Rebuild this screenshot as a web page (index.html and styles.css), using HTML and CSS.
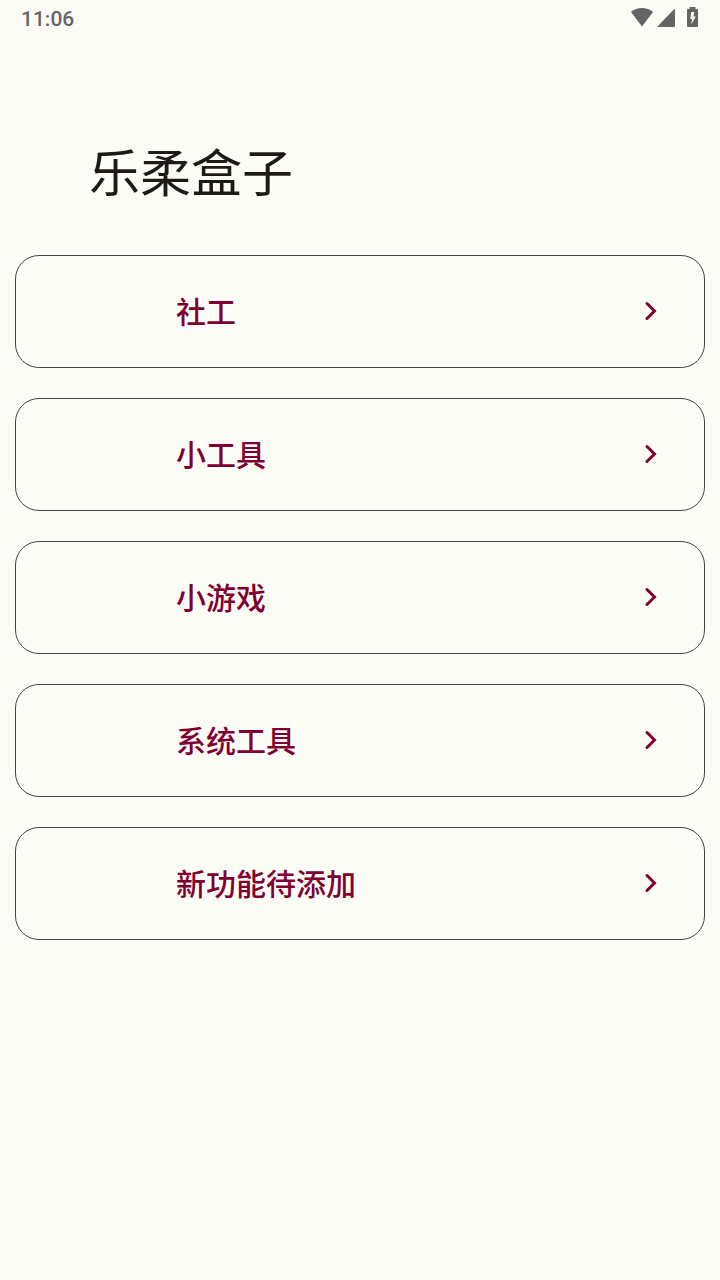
FILE: index.html
```html
<!DOCTYPE html>
<html lang="zh-CN">
<head>
    <meta charset="UTF-8">
    <meta name="viewport" content="width=device-width, initial-scale=1.0">
    <title>乐柔盒子</title>
    <link rel="stylesheet" href="styles.css">
</head>
<body>

<div class="status-bar">
    <span class="time">11:06</span>
    <div class="status-icons">
        <svg class="wifi" width="24" height="20" viewBox="0 0 24 20" aria-hidden="true">
            <path d="M12 19.5 L1 5 C7 -0.4 17 -0.4 23 5 Z"/>
        </svg>
        <svg class="signal" width="18" height="20" viewBox="0 0 18 20" aria-hidden="true">
            <path d="M0 20 L16.8 2.4 Q18 1.4 18 3 V19 Q18 20 17 20 Z"/>
        </svg>
        <svg class="battery" width="11" height="20" viewBox="0 0 11 20" aria-hidden="true">
            <path fill-rule="evenodd" d="M2.5 0 H8.5 V2 H10 Q11 2 11 3 V19 Q11 20 10 20 H1 Q0 20 0 19 V3 Q0 2 1 2 H2.5 Z M7.2 5 H4.4 L3.2 12 H5 L4.2 17.4 L8.8 9.4 H6.4 Z"/>
        </svg>
    </div>
</div>

<h1>乐柔盒子</h1>

<main class="menu">
    <button type="button" class="card">
        <span>社工</span>
        <svg class="arrow" width="14" height="20" viewBox="0 0 14 20" aria-hidden="true"><path d="M3 2.5 L10.5 10 L3 17.5"/></svg>
    </button>
    <button type="button" class="card">
        <span>小工具</span>
        <svg class="arrow" width="14" height="20" viewBox="0 0 14 20" aria-hidden="true"><path d="M3 2.5 L10.5 10 L3 17.5"/></svg>
    </button>
    <button type="button" class="card">
        <span>小游戏</span>
        <svg class="arrow" width="14" height="20" viewBox="0 0 14 20" aria-hidden="true"><path d="M3 2.5 L10.5 10 L3 17.5"/></svg>
    </button>
    <button type="button" class="card">
        <span>系统工具</span>
        <svg class="arrow" width="14" height="20" viewBox="0 0 14 20" aria-hidden="true"><path d="M3 2.5 L10.5 10 L3 17.5"/></svg>
    </button>
    <button type="button" class="card">
        <span>新功能待添加</span>
        <svg class="arrow" width="14" height="20" viewBox="0 0 14 20" aria-hidden="true"><path d="M3 2.5 L10.5 10 L3 17.5"/></svg>
    </button>
</main>

</body>
</html>
```
FILE: styles.css
```css
* {
    box-sizing: border-box;
}
body {
    margin: 0;
    background-color: #fcfcf7;
    font-family: Roboto, "Noto Sans CJK SC", sans-serif;
}
.status-bar {
    display: flex;
    justify-content: space-between;
    align-items: flex-start;
    padding: 7px 22px 0 21px;
    color: #646464;
}
.time {
    font-size: 21px;
    font-weight: 500;
    line-height: 24px;
}
.status-icons {
    display: flex;
    gap: 3px;
    fill: #646464;
}
.battery {
    margin-left: 9px;
}
h1 {
    margin: 104px 89px 40px;
    font-size: 51px;
    font-weight: 400;
    line-height: 80px;
    color: #1e1b16;
}
.menu {
    display: flex;
    flex-direction: column;
    gap: 30px;
    padding: 0 15px 30px;
}
.card {
    display: flex;
    justify-content: space-between;
    align-items: center;
    padding: 34px 46px 32px 160px;
    border: 1px solid #444;
    border-radius: 24px;
    background: none;
    color: #800030;
    font-family: inherit;
    font-size: 30px;
    font-weight: 500;
    line-height: 45px;
    text-align: left;
    cursor: pointer;
}
.arrow {
    margin-bottom: 3px;
    fill: none;
    stroke: #800030;
    stroke-width: 3;
    stroke-linecap: round;
}
```
